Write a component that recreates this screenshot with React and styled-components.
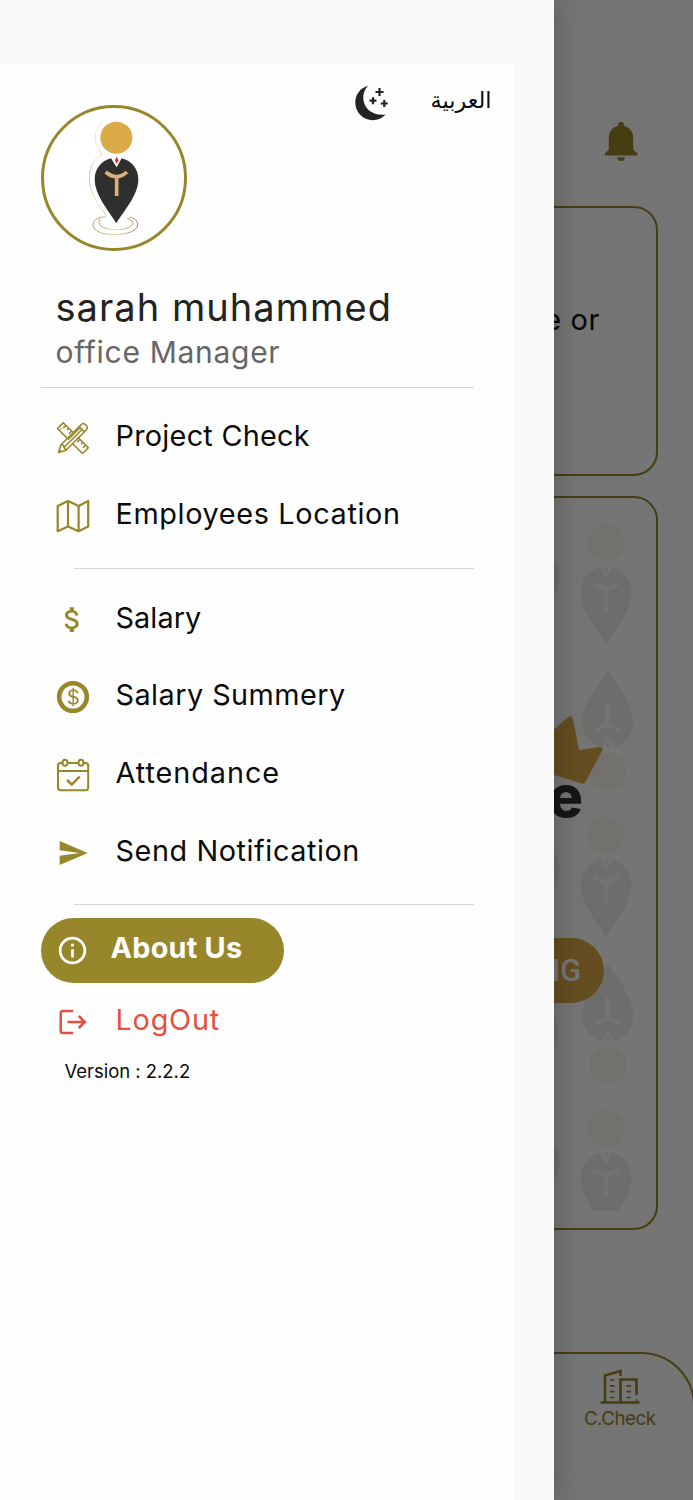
import React from "react";
import styled, { createGlobalStyle } from "styled-components";
import { BsCurrencyDollar } from "react-icons/bs";
import { MdAttachMoney, MdSend, MdInfoOutline } from "react-icons/md";

const colors = {
  gold: "#98862b",
  amber: "#dbab48",
  dark: "#2f2f2d",
  red: "#e4503f",
  line: "#d6d6d6",
};

const GlobalStyle = createGlobalStyle`
  * {
    box-sizing: border-box;
  }

  body {
    margin: 0;
    font-family: Inter, "Noto Sans", sans-serif;
    color: #0b0b0b;
  }

  svg {
    display: block;
  }
`;

// *************************************
// HOME PAGE (behind the drawer)
// *************************************

const Screen = styled.div`
  position: relative;
  width: 693px;
  height: 1500px;
  overflow: hidden;
  background: #fefefe;
`;

const Home = styled.main`
  display: flex;
  flex-direction: column;
  height: 100%;
`;

const TopBar = styled.header`
  display: flex;
  justify-content: flex-end;
  flex-shrink: 0;
  height: 206px;
  padding: 121px 55px 0 0;
`;

const Card = styled.section`
  position: relative;
  display: flex;
  flex-direction: column;
  align-items: flex-end;
  flex-shrink: 0;
  height: ${({ $height }) => $height}px;
  margin: 0 35px 20px;
  border: 2px solid ${colors.gold};
  border-radius: 24px;
`;

const Notice = styled.p`
  margin: 92px 56px 0 0;
  font-size: 29px;
  line-height: 40px;
  letter-spacing: 0.6px;
`;

const Pattern = styled.svg`
  position: absolute;
  top: -1px;
  left: 0;
  opacity: 0.08;
`;

const Crown = styled.svg`
  position: absolute;
  top: 215px;
  right: 52px;
`;

const Title = styled.h1`
  position: relative;
  margin: 262px 73px 0 0;
  font-size: 58px;
  font-weight: 800;
  line-height: 72px;
  color: #303030;
`;

const StartButton = styled.button`
  position: relative;
  width: 240px;
  height: 65px;
  margin: 106px 52px 0 0;
  padding: 0 23px 0 0;
  border: 0;
  border-radius: 33px;
  background: ${colors.amber};
  color: #fff;
  font-family: Roboto, sans-serif;
  font-size: 31px;
  font-weight: 500;
  text-align: right;
`;

const BottomNav = styled.nav`
  display: flex;
  justify-content: flex-end;
  flex-shrink: 0;
  height: 170px;
  margin: 102.5px -2px 0;
  padding: 15px 37.5px 0 0;
  border: 2px solid ${colors.gold};
  border-radius: 54px 54px 0 0;
`;

const NavItem = styled.div`
  display: flex;
  flex-direction: column;
  align-items: center;
  color: ${colors.gold};
  font-size: 18.8px;
  line-height: 27px;
  letter-spacing: -0.5px;
`;

const Scrim = styled.div`
  position: absolute;
  inset: 0;
  background: rgba(0, 0, 0, 0.54);
`;

// *************************************
// DRAWER
// *************************************

const Drawer = styled.aside`
  position: absolute;
  top: 0;
  left: 0;
  width: 554px;
  height: 1500px;
  padding-top: 65px;
  background: #fafafa;
  box-shadow: 4px 0 26px rgba(0, 0, 0, 0.2);
`;

const Panel = styled.div`
  display: flex;
  flex-direction: column;
  width: 514px;
  height: 100%;
  padding: 0 40.5px;
  background: #fefefe;
`;

const Profile = styled.div`
  display: flex;
  justify-content: space-between;
  height: 217px;
  margin-right: -18px;
`;

const Avatar = styled.div`
  width: 146px;
  height: 146px;
  margin-top: 40px;
  border: 3px solid ${colors.gold};
  border-radius: 50%;
  background: #fff;
`;

const Tools = styled.div`
  display: flex;
  align-items: flex-start;
  gap: 42px;
  padding-top: 20px;
`;

const Language = styled.span`
  font-family: "DejaVu Sans", sans-serif;
  font-size: 22.3px;
  line-height: 31px;
`;

const Name = styled.h2`
  margin: 0;
  padding-left: 15px;
  font-size: 38px;
  font-weight: 400;
  line-height: 50px;
  letter-spacing: ${({ $track }) => $track}px;
  white-space: nowrap;
  color: #222;
`;

const Role = styled.p`
  margin: 0 0 15px;
  padding-left: 15px;
  font-size: 30px;
  line-height: 40px;
  letter-spacing: ${({ $track }) => $track}px;
  color: #666;
`;

const Divider = styled.hr`
  flex-shrink: 0;
  width: ${({ $inset }) => ($inset ? 400 : 433)}px;
  height: 1px;
  margin: ${({ $inset }) => ($inset ? "12.7px 0 12.4px auto" : "0 0 11.5px")};
  border: 0;
  background: ${colors.line};
`;

const Row = styled.div`
  display: flex;
  align-items: center;
  flex-shrink: 0;
  height: 77.7px;
  padding-left: 15px;
  color: ${({ $color }) => $color || colors.gold};
`;

const IconSlot = styled.span`
  display: flex;
  align-items: center;
  justify-content: center;
  width: 34px;
  height: 34px;
`;

const Label = styled.span`
  padding: 0 0 4px 26px;
  font-size: 28.8px;
  line-height: 36px;
  letter-spacing: ${({ $track }) => $track}px;
  white-space: nowrap;
  color: ${({ $color }) => $color || "#0b0b0b"};
`;

const AboutButton = styled.button`
  display: flex;
  align-items: center;
  flex-shrink: 0;
  width: 243px;
  height: 65px;
  padding: 0 0 0 15px;
  border: 0;
  border-radius: 33px;
  background: ${colors.gold};
  color: #fff;
  font-family: inherit;
`;

const AboutLabel = styled(Label)`
  padding-left: 21px;
  font-weight: 700;
`;

const Version = styled.p`
  margin: -1px 0 0;
  padding-left: 24px;
  font-size: 18.5px;
  line-height: 24px;
  letter-spacing: ${({ $track }) => $track}px;
`;

// *************************************
// DRAWINGS
// *************************************

const bodyPath =
  "M243 235 L260 262 L275 235 C305 242 325 268 325 298 C325 345 285 388 259 430 C233 388 194 345 194 298 C194 268 214 242 243 235Z";

function Figure({ mark = "#d8b17a" }) {
  return (
    <>
      <circle cx="259" cy="173" r="48" fill={colors.amber} />
      <path d={bodyPath} fill={colors.dark} />
      <path d="M260 230 l5 11 -5 11 -5 -11Z" fill="#d8262c" />
      <path
        d="M227 276 Q260 304 291 276 M260 292 V348"
        fill="none"
        stroke={mark}
        strokeWidth="11"
      />
    </>
  );
}

function Logo() {
  return (
    <svg width="140" height="140" viewBox="42 84 420 420">
      <defs>
        <linearGradient id="bronze" x1="0" x2="1">
          <stop offset="0" stopColor="#b98d55" />
          <stop offset="0.5" stopColor="#ecd6b0" />
          <stop offset="1" stopColor="#a87842" />
        </linearGradient>
      </defs>
      <g fill="none" stroke="url(#bronze)">
        <path
          d="M218 127 C188 148 189 195 218 222 C188 238 178 262 178 297 C178 340 208 372 228 407"
          strokeWidth="1.6"
        />
        <path
          d="M226 410 C178 414 178 448 218 460 C262 470 322 460 323 434 C323 422 312 414 299 411"
          strokeWidth="3"
        />
        <path
          d="M211 418 C198 432 216 449 259 449 C302 449 318 432 302 420 L292 415"
          strokeWidth="2.6"
        />
      </g>
      <Figure />
    </svg>
  );
}

const figures = [
  { x: 606, y: 543, s: 1 },
  { x: 608, y: 772, s: -1 },
  { x: 606, y: 836, s: 1 },
  { x: 608, y: 1065.5, s: -1 },
  { x: 606, y: 1129, s: 1 },
  { x: 534, y: 526, s: 1 },
  { x: 534, y: 819, s: 1 },
  { x: 533, y: 1082, s: -1 },
  { x: 534, y: 1112, s: 1 },
];

function FigurePattern() {
  return (
    <Pattern width="619" height="714" viewBox="37 497.5 619 714">
      {figures.map(({ x, y, s }) => (
        <g
          key={`${x}-${y}`}
          transform={`translate(${x} ${y}) scale(${0.386 * s} ${0.395 * s}) translate(-259 -173)`}
        >
          <Figure mark="#f3d9b3" />
        </g>
      ))}
    </Pattern>
  );
}

function MoonIcon() {
  return (
    <svg width="34" height="36" viewBox="0 0 34 36" fill="#232323">
      <path d="M13 0.7C6 2.5 0.3 9 0.3 17.5C0.3 27.5 8.2 35.2 17.8 35.2C23 35.2 27.5 33 30.5 29.5C17.5 31 9 24 8.3 13.5C8 8.5 9.8 4 13 0.7Z" />
      <path
        d="M24.5 3v8M20.5 7h8M18 12.2v7M14.5 15.7h7M29.3 15v7M25.8 18.5h7"
        stroke="#232323"
        strokeWidth="2.2"
      />
    </svg>
  );
}

function BellIcon() {
  return (
    <svg width="34" height="40" viewBox="0 0 34 40" fill={colors.gold}>
      <path d="M17 0.7c-1.9 0-3.2 1.4-3.2 3.2v1C8.3 6.3 4.8 10.8 4.8 16.5v12L0.7 32.6v1.8h32.7v-1.8L29.2 28.5v-12c0-5.7-3.5-10.2-9-11.6v-1C20.2 2.1 18.9 0.7 17 0.7Z" />
      <path d="M13 36.3h8c0 2.2-1.7 3.8-4 3.8s-4-1.6-4-3.8Z" />
    </svg>
  );
}

function ToolsIcon() {
  return (
    <svg width="34" height="34" viewBox="0 0 34 34">
      <g fill="none" stroke="currentColor" strokeWidth="1.6" strokeLinejoin="round">
        <path d="M1.5 7.5 L7.3 1.7 L32.3 26.7 L26.5 32.5Z" />
        <path d="M10 4.4l-2.7 2.7M12.8 7.2l-1.7 1.7M15.6 10l-2.7 2.7M24 18.4l-2.7 2.7M26.8 21.2l-1.7 1.7M29.6 24l-2.7 2.7M4.6 7.4l.8.8" />
        <path
          d="M2.5 31.5 L5 23.8 L25.8 3 C27.5 1.2 31 4.8 31.3 6.6 C31.5 7.5 31 8.2 30.2 9 L10 29.3Z"
          fill="#fefefe"
        />
        <path d="M5 23.8l2.6.6.6 2.2 1.8 2.7M8.2 26.2 L26.5 8M23.2 5.6l5.2 5.3M3.3 28.8l2 2M12 18.8l12-12" />
      </g>
    </svg>
  );
}

function MapIcon() {
  return (
    <svg
      width="34"
      height="34"
      viewBox="0 0 34 34"
      fill="none"
      stroke="currentColor"
      strokeWidth="2.2"
      strokeLinejoin="round"
    >
      <path d="M1.7 7 L12 2 L22.6 7 L32.2 2 V27.5 L22.6 32.2 L12 27.5 L1.7 32.2Z" />
      <path d="M12 2V27.5M22.6 7V32.2" />
    </svg>
  );
}

function CoinIcon() {
  return (
    <svg width="34" height="34" viewBox="0 0 34 34">
      <circle cx="17" cy="17" r="13.8" fill="none" stroke="currentColor" strokeWidth="4.6" />
      <BsCurrencyDollar x="6.5" y="6.5" size="21" />
    </svg>
  );
}

function CalendarIcon() {
  return (
    <svg
      width="34"
      height="34"
      viewBox="0 0 34 34"
      fill="none"
      stroke="currentColor"
      strokeWidth="2"
    >
      <path d="M6 5H4.5C3 5 2 6 2 7.5v22C2 31.3 3 32.3 4.5 32.3h25c1.5 0 2.7-1 2.7-2.8v-22C32.2 6 31 5 29.5 5H28M12 5h10M2 13h30" />
      <ellipse cx="9" cy="4.8" rx="2.5" ry="3" />
      <ellipse cx="25" cy="4.8" rx="2.5" ry="3" />
      <path d="M11 22l4.8 4.5 8-8" strokeWidth="2.4" />
    </svg>
  );
}

function LogoutIcon() {
  return (
    <svg
      width="28"
      height="26"
      viewBox="0 0 28 26"
      fill="none"
      stroke="currentColor"
      strokeWidth="2.5"
    >
      <path d="M14.2 2H4C2.5 2 1.7 2.8 1.7 4.3v17.4c0 1.5.8 2.3 2.3 2.3h10.2" />
      <path d="M8.5 13h17M19.8 7l6 6-6 6" />
    </svg>
  );
}

function BuildingIcon() {
  return (
    <svg width="40" height="36" viewBox="0 0 40 36" fill="none" stroke={colors.gold}>
      <path
        d="M0.5 33.5h39M5 33V6.5L20.5 2v5M20.5 33V10.5H36.5V26"
        strokeWidth="2.6"
      />
      <path
        d="M10 11h4.5M10 16.8h4.5M10 22.6h4.5M10 28.5h4.5M26.5 16.8H31M26.5 22.6H31M26.5 28.5H31"
        strokeWidth="1.7"
      />
      <path d="M36.5 30v2" strokeWidth="1.5" />
    </svg>
  );
}

// *************************************
// MENU
// *************************************

const projectLinks = [
  { label: "Project Check", icon: <ToolsIcon />, track: 0.27 },
  { label: "Employees Location", icon: <MapIcon />, track: 0.65 },
];

const staffLinks = [
  { label: "Salary", icon: <MdAttachMoney size={33} />, track: 0.1 },
  { label: "Salary Summery", icon: <CoinIcon />, track: 0.47 },
  { label: "Attendance", icon: <CalendarIcon />, track: 0.95 },
  { label: "Send Notification", icon: <MdSend size={32} />, track: 0.58 },
];

function MenuRow({ label, icon, track, color }) {
  return (
    <Row $color={color}>
      <IconSlot>{icon}</IconSlot>
      <Label $track={track} $color={color}>
        {label}
      </Label>
    </Row>
  );
}

export default function App() {
  return (
    <Screen>
      <GlobalStyle />

      <Home>
        <TopBar>
          <BellIcon />
        </TopBar>

        <Card $height={269.5}>
          <Notice>e or</Notice>
        </Card>

        <Card $height={734}>
          <FigurePattern />
          <Title>e</Title>
          <Crown width="70" height="74" viewBox="534 713 70 74">
            <path
              d="M538 744 L567 718 Q571 714 573 719 L579 750 L599 747 Q604 747 602 751 L586 781 Q584 785 580 783 L538 770Z"
              fill={colors.amber}
            />
          </Crown>
          <StartButton>NG</StartButton>
        </Card>

        <BottomNav>
          <NavItem>
            <BuildingIcon />
            C.Check
          </NavItem>
        </BottomNav>
      </Home>

      <Scrim />

      <Drawer>
        <Panel>
          <Profile>
            <Avatar>
              <Logo />
            </Avatar>
            <Tools>
              <MoonIcon />
              <Language lang="ar">العربية</Language>
            </Tools>
          </Profile>

          <Name $track={1.05}>sarah muhammed</Name>
          <Role $track={0.7}>office Manager</Role>
          <Divider />

          {projectLinks.map((link) => (
            <MenuRow key={link.label} {...link} />
          ))}
          <Divider $inset />

          {staffLinks.map((link) => (
            <MenuRow key={link.label} {...link} />
          ))}
          <Divider $inset />

          <AboutButton>
            <IconSlot>
              <MdInfoOutline size={33} />
            </IconSlot>
            <AboutLabel $track={0.25} $color="#fff">
              About Us
            </AboutLabel>
          </AboutButton>
          <MenuRow label="LogOut" icon={<LogoutIcon />} track={0.8} color={colors.red} />
          <Version $track={-0.03}>Version : 2.2.2</Version>
        </Panel>
      </Drawer>
    </Screen>
  );
}
